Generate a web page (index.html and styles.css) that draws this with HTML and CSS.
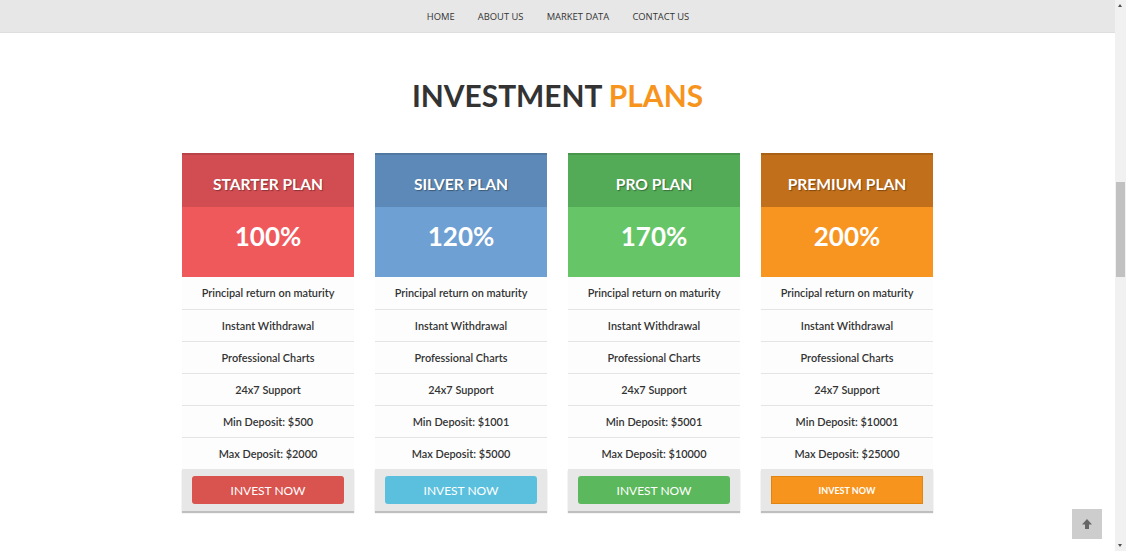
FILE: index.html
```html
<!DOCTYPE html>
<html>
<head>
<meta charset="utf-8">
<link rel="stylesheet" href="styles.css">
</head>
<body>
<div class="window">
  <div class="page">
    <nav class="nav">
      <a>HOME</a><a>ABOUT US</a><a>MARKET DATA</a><a>CONTACT US</a>
    </nav>
    <h1 class="title">INVESTMENT <span>PLANS</span></h1>
    <div class="plans">
      <div class="plan red">
        <div class="head">STARTER PLAN</div>
        <div class="price">100%</div>
        <ul class="features">
          <li>Principal return on maturity</li>
          <li>Instant Withdrawal</li>
          <li>Professional Charts</li>
          <li>24x7 Support</li>
          <li>Min Deposit: $500</li>
          <li>Max Deposit: $2000</li>
        </ul>
        <div class="foot"><a class="btn">INVEST NOW</a></div>
      </div>
      <div class="plan blue">
        <div class="head">SILVER PLAN</div>
        <div class="price">120%</div>
        <ul class="features">
          <li>Principal return on maturity</li>
          <li>Instant Withdrawal</li>
          <li>Professional Charts</li>
          <li>24x7 Support</li>
          <li>Min Deposit: $1001</li>
          <li>Max Deposit: $5000</li>
        </ul>
        <div class="foot"><a class="btn">INVEST NOW</a></div>
      </div>
      <div class="plan green">
        <div class="head">PRO PLAN</div>
        <div class="price">170%</div>
        <ul class="features">
          <li>Principal return on maturity</li>
          <li>Instant Withdrawal</li>
          <li>Professional Charts</li>
          <li>24x7 Support</li>
          <li>Min Deposit: $5001</li>
          <li>Max Deposit: $10000</li>
        </ul>
        <div class="foot"><a class="btn">INVEST NOW</a></div>
      </div>
      <div class="plan orange">
        <div class="head">PREMIUM PLAN</div>
        <div class="price">200%</div>
        <ul class="features">
          <li>Principal return on maturity</li>
          <li>Instant Withdrawal</li>
          <li>Professional Charts</li>
          <li>24x7 Support</li>
          <li>Min Deposit: $10001</li>
          <li>Max Deposit: $25000</li>
        </ul>
        <div class="foot"><a class="btn">INVEST NOW</a></div>
      </div>
    </div>
    <a class="totop"><svg width="12" height="12" viewBox="0 0 12 12"><path d="M6 1 L11 6.5 L8 6.5 L8 11 L4 11 L4 6.5 L1 6.5 Z" fill="#666"/></svg></a>
  </div>
  <div class="scrollbar">
    <div class="arrow up"></div>
    <div class="track"><div class="thumb"></div></div>
    <div class="arrow down"></div>
  </div>
</div>
</body>
</html>
```

FILE: styles.css
```css
* { box-sizing: border-box; }
html, body { margin: 0; padding: 0; }
body { background: #fff; font-family: Lato, "Open Sans", sans-serif; overflow: hidden; }
.window { display: flex; width: 1126px; height: 551px; }
.page { width: 1115px; height: 551px; position: relative; }
.nav {
  height: 33px; background: #e7e7e7;
  display: flex; justify-content: center; align-items: center;
  padding-left: 1px; padding-top: 1px;
  border-bottom: 1px solid #dedede;
}
.nav a {
  font-family: "Open Sans", sans-serif; font-size: 9.4px; color: #333;
  padding: 0 11.6px;
}
.title {
  margin: 44px 0 0; text-align: center;
  font-family: Lato, sans-serif; font-weight: 700; font-size: 29.9px;
  color: #333; line-height: 36px;
}
.title span { color: #f7941d; }
.plans {
  display: flex; justify-content: center; gap: 21px;
  margin-top: 40px;
}
.plan { width: 172px; }
.head {
  height: 54px; display: flex; align-items: center; justify-content: center;
  color: #fff; font-weight: 700; font-size: 15.6px; padding-top: 5px;
  text-shadow: 1px 1px 1px rgba(0,0,0,0.35);
  border-top: 2px solid rgba(0,0,0,0.12);
}
.price {
  height: 70px; display: flex; align-items: center; justify-content: center;
  color: #fff; font-weight: 700; font-size: 26px; padding-bottom: 12px;
}
.features { list-style: none; margin: 0; padding: 0; }
.features li {
  height: 32px; display: flex; align-items: center; justify-content: center;
  font-size: 10.9px; font-weight: 600; color: #333; background: #fdfdfd;
  border-top: 1px solid #e4e4e4; padding-bottom: 1px;
}
.features li:first-child { border-top: none; }
.foot {
  height: 42px; background: #e7e7e7; display: flex; justify-content: center;
  padding-top: 7px;
  box-shadow: 0 2px 1px rgba(0,0,0,0.25);
}
.btn {
  width: 152px; height: 28px; border-radius: 3px; color: #fff;
  display: flex; align-items: center; justify-content: center;
  font-size: 12px;
}
.red .head { background: #d24d52; }
.red .price { background: #f0595c; }
.red .btn { background: #d9534f; }
.blue .head { background: #5c89b7; }
.blue .price { background: #6fa0d3; }
.blue .btn { background: #5bc0de; }
.green .head { background: #53aa57; }
.green .price { background: #66c667; }
.green .btn { background: #5cb85c; }
.orange .head { background: #c16f1a; }
.orange .price { background: #f89420; }
.orange .btn { background: #f7941d; border-radius: 0; font-size: 9px; font-weight: 700; border: 1px solid #e0850f; }
.totop {
  position: absolute; left: 1072px; top: 509px; width: 30px; height: 30px;
  background: #cdcdcd; display: flex; align-items: center; justify-content: center;
}
.scrollbar { width: 11px; height: 551px; background: #f1f1f1; display: flex; flex-direction: column; }
.arrow { height: 11px; position: relative; }
.arrow.up::after, .arrow.down::after {
  content: ""; position: absolute; left: 3px; border-left: 2.5px solid transparent; border-right: 2.5px solid transparent;
}
.arrow.up::after { top: 4px; border-bottom: 3px solid #505050; }
.arrow.down::after { top: 4px; border-top: 3px solid #505050; }
.track { flex: 1; padding-top: 171px; }
.thumb { width: 9px; margin-left: 1px; height: 95px; background: #c1c1c1; }
```
